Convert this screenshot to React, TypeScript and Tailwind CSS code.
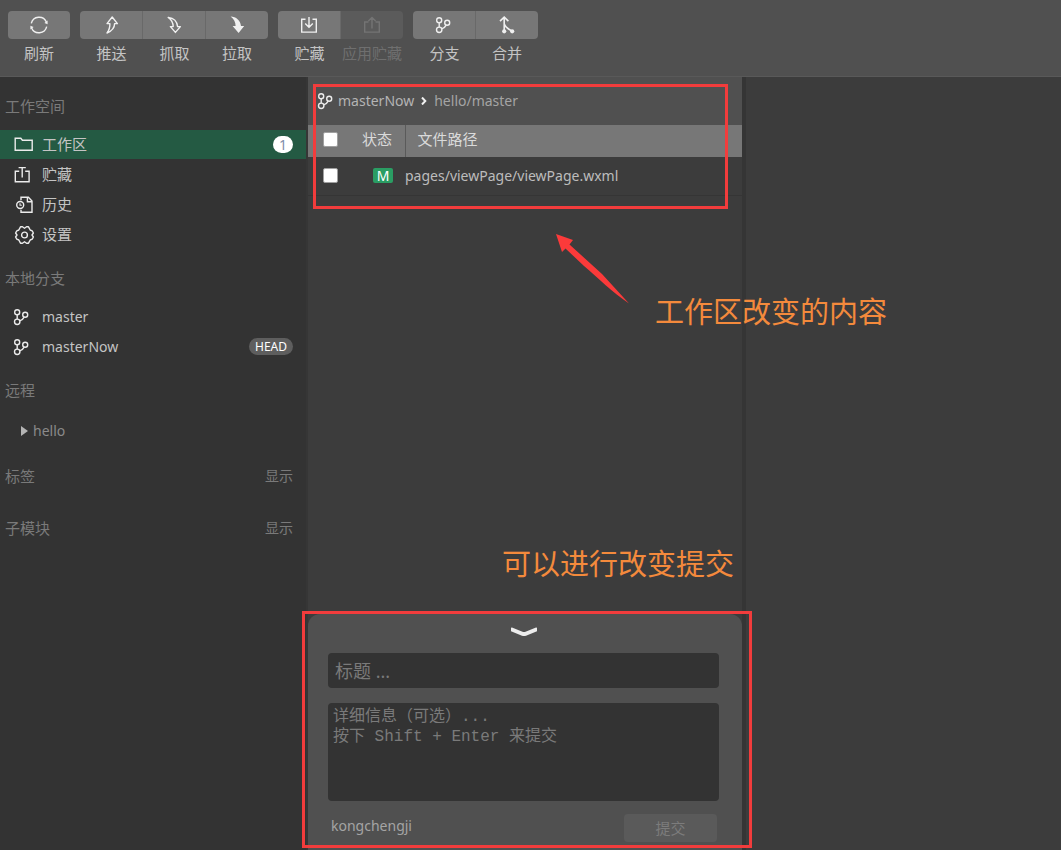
import type { ReactNode } from "react";

type IconProps = { className?: string };

function Svg({ className = "", children }: IconProps & { children: ReactNode }) {
  return (
    <svg
      viewBox="0 0 20 20"
      className={`size-5 shrink-0 ${className}`}
      fill="none"
      stroke="currentColor"
      strokeWidth="1.4"
      aria-hidden="true"
    >
      {children}
    </svg>
  );
}

const RefreshIcon = () => (
  <Svg>
    <path d="M2.3 8.3A8 8 0 0 1 17.4 7M17.7 11.7A8 8 0 0 1 2.6 13" />
    <path d="M18.6 5.6v3.6l-3.2-1.2zM1.4 14.4v-3.6l3.2 1.2z" fill="currentColor" stroke="none" />
  </Svg>
);

const PushIcon = () => (
  <Svg>
    <path
      d="M11.2 2L16.400 8.600h-2.800c0 4-2.400 7.400-7.600 9.400c2-2.400 3-5 2.900-9.400H6z"
      strokeLinejoin="round"
    />
  </Svg>
);

const FetchIcon = () => (
  <Svg>
    <path
      d="M4.200 2.400c5 .6 8.800 3.600 9.400 9.200h2.800l-5 5.800l-5-5.800h2.800c0-3.600-1.800-6.800-5-9.200z"
      strokeLinejoin="round"
    />
  </Svg>
);

const PullIcon = () => (
  <Svg>
    <path d="M3.6 1.6c5.6.4 9.6 3.600 10.400 9.400h3.200l-5.600 7l-6-7h3c0-3.600-1.600-6.800-5-9.400z" fill="currentColor" stroke="none" />
  </Svg>
);

const StashIcon = () => (
  <Svg>
    <path d="M6.500 4.300H2.700v12.800h14.600V4.300h-3.800M10 2v10M6.200 8.400l3.800 3.800l3.800-3.800" />
  </Svg>
);

const ApplyIcon = () => (
  <Svg>
    <path d="M6.500 7H2.700v10.100h14.600V7h-3.800M10 13.400V2.600M6.400 6L10 2.400L13.600 6" />
  </Svg>
);

const BranchIcon = ({ className = "" }: IconProps) => (
  <Svg className={className}>
    <circle cx="5.200" cy="5.200" r="2.500" />
    <circle cx="5.200" cy="14.800" r="2.700" />
    <circle cx="13.200" cy="7.800" r="2.500" />
    <path d="M5.200 7.800v4.200M12.200 10.100c-1 2-2.200 2.900-4.500 3.800" />
  </Svg>
);

const MergeIcon = () => (
  <Svg>
    <path d="M7.200 16V2.400M3 6.200l4.200-4l4.200 4M7.200 8.800c.8 3 3 4.600 7.200 7" strokeWidth="1.600" />
    <circle cx="7.200" cy="16.300" r="2.100" fill="currentColor" stroke="none" />
    <circle cx="15.200" cy="16.300" r="2.100" fill="currentColor" stroke="none" />
  </Svg>
);

const FolderIcon = () => (
  <Svg>
    <path d="M1.200 3.200h5.600l1.600 2h9.800v10H1.200z" />
  </Svg>
);

const ShelfIcon = () => (
  <Svg>
    <path d="M5.200 6.200H1.300v10.600h13.800V6.200h-3.900M8.200 12.400V2.600M4.600 2.600h7.200" />
  </Svg>
);

const HistoryIcon = () => (
  <Svg>
    <path d="M7 5.300V2.300h7.400l3.600 3.700v11.200H7v-2.400M13.400 2.500v4.300h4.400" />
    <circle cx="6.200" cy="10" r="3.500" />
    <path d="M6 8.200v2h1.800" strokeWidth="1.100" />
  </Svg>
);

const SettingsIcon = () => (
  <Svg className="translate-x-0">
    <path
      d="M6.500 1.800h2L10.500 3.200L12.500 1.800h2l1.700 3.200l2 .8l1.200 2.200l-1.400 2l1.400 2l-1.200 2.200l-2 .8l-1.700 3.200h-2L10.500 16.800L8.500 18.200h-2L4.800 15l-2-.8l-1.200-2.200l1.400-2l-1.400-2l1.200-2.200l2-.8z"
      strokeLinejoin="round"
    />
    <circle cx="10.500" cy="10" r="2.900" />
  </Svg>
);

type Tool = { label: string; icon: ReactNode; disabled?: boolean };

const toolGroups: Tool[][] = [
  [{ label: "刷新", icon: <RefreshIcon /> }],
  [
    { label: "推送", icon: <PushIcon /> },
    { label: "抓取", icon: <FetchIcon /> },
    { label: "拉取", icon: <PullIcon /> },
  ],
  [
    { label: "贮藏", icon: <StashIcon /> },
    { label: "应用贮藏", icon: <ApplyIcon />, disabled: true },
  ],
  [
    { label: "分支", icon: <BranchIcon /> },
    { label: "合并", icon: <MergeIcon /> },
  ],
];

const workspaceItems = [
  { label: "工作区", icon: <FolderIcon />, count: 1 },
  { label: "贮藏", icon: <ShelfIcon /> },
  { label: "历史", icon: <HistoryIcon /> },
  { label: "设置", icon: <SettingsIcon /> },
];

const branches = [{ name: "master" }, { name: "masterNow", head: true }];

function Toolbar() {
  return (
    <header className="flex h-[77px] gap-2.5 border-b border-[#595959] bg-[#505050] px-2 pt-[11px]">
      {toolGroups.map((group) => (
        <div key={group[0].label} className="flex">
          {group.map((tool) => (
            <button
              key={tool.label}
              type="button"
              disabled={tool.disabled}
              className="group flex w-[63px] flex-col items-center gap-1 whitespace-nowrap text-[#c4c4c4] last:w-[62px] disabled:text-[#6f6f6f]"
            >
              <span className="flex h-7 w-full items-center justify-center border-r border-[#696969] bg-[#777777] text-[#f0f0f0] group-first:rounded-l group-last:rounded-r group-last:border-r-0 group-disabled:bg-[#5b5b5b] group-disabled:text-[#747474]">
                {tool.icon}
              </span>
              <span className="leading-5">{tool.label}</span>
            </button>
          ))}
        </div>
      ))}
    </header>
  );
}

function Heading({ children }: { children: ReactNode }) {
  return <h2 className="px-[5px] leading-5 text-[#7a7a7a]">{children}</h2>;
}

function Sidebar() {
  return (
    <nav className="border-r-2 border-[#363636] bg-[#333333] pt-[19px]">
      <Heading>工作空间</Heading>
      <ul className="mt-3.5 flex flex-col gap-px">
        {workspaceItems.map((item) => (
          <li key={item.label}>
            <a
              href="#"
              className={`flex h-[29px] items-center gap-2 pr-[13px] pl-3.5 text-[#c4c4c4] ${item.count ? "bg-[#245a43]" : ""}`}
            >
              <span className="text-[#ececec]">{item.icon}</span>
              {item.label}
              {item.count && (
                <span className="ml-auto w-5 rounded-full bg-white text-center text-sm leading-[17px] text-[#7f8dab]">
                  {item.count}
                </span>
              )}
            </a>
          </li>
        ))}
      </ul>

      <div className="mt-[19px]">
        <Heading>本地分支</Heading>
      </div>
      <ul className="mt-3.5 flex flex-col gap-px">
        {branches.map((branch) => (
          <li key={branch.name}>
            <a href="#" className="flex h-[29px] items-center gap-2 pr-[13px] pl-3 text-sm text-[#c4c4c4]">
              <BranchIcon className="mr-0.5 text-[#ececec]" />
              {branch.name}
              {branch.head && (
                <span className="ml-auto rounded-full bg-[#5e5e5e] px-1.5 text-xs leading-[17px] text-white">
                  HEAD
                </span>
              )}
            </a>
          </li>
        ))}
      </ul>

      <div className="mt-[19px]">
        <Heading>远程</Heading>
      </div>
      <button
        type="button"
        className="mt-3.5 mb-[18px] flex h-[34px] items-center gap-[5px] pl-[21px] text-sm text-[#8a8a8a]"
      >
        <svg viewBox="0 0 7 10" className="h-2.5 w-[7px]" fill="#b4b4b4" aria-hidden="true">
          <path d="M0 0l7 5l-7 5z" />
        </svg>
        hello
      </button>

      {["标签", "子模块"].map((title) => (
        <div key={title} className="mb-8 flex items-center justify-between pr-[13px]">
          <Heading>{title}</Heading>
          <button type="button" aria-label={`显示${title}`} className="text-sm leading-5 text-[#7a7a7a]">
            显示
          </button>
        </div>
      ))}
    </nav>
  );
}

function Tick({ label }: { label: string }) {
  return (
    <input
      type="checkbox"
      aria-label={label}
      className="block size-[15px] appearance-none rounded-xs border border-[#a0a0a0] bg-white checked:bg-[#2aa568]"
    />
  );
}

function Changes() {
  return (
    <section className="relative">
      <div className="flex h-12 items-center bg-[#505050] pl-2 text-sm">
        <BranchIcon className="mr-0.5 text-[#ececec]" />
        <span className="text-[#b4b4b4]">masterNow</span>
        <svg viewBox="0 0 6 8" className="mx-[7px] h-2 w-1.5" fill="none" stroke="#f0f0f0" strokeWidth="2" aria-hidden="true">
          <path d="M1 0.500l3.300 3.500l-3.300 3.500" />
        </svg>
        <span className="text-[#a4a4a4]">hello/master</span>
      </div>
      <table className="w-full table-fixed border-collapse text-left">
        <thead>
          <tr className="h-8 bg-[#777777] text-[#dadada]">
            <th className="w-11 pb-1 pl-[15px] font-normal">
              <Tick label="全选" />
            </th>
            <th className="w-[53px] border-r border-[#5a5a5a] pb-1 pl-2.5 font-normal">状态</th>
            <th className="pb-1 pl-3 font-normal">文件路径</th>
          </tr>
        </thead>
        <tbody>
          <tr className="h-[38px] border-b border-[#353535] text-[#bcbcbc]">
            <td className="pl-[15px]">
              <Tick label="pages/viewPage/viewPage.wxml" />
            </td>
            <td className="pl-[21px]">
              <span className="block w-5 rounded-xs bg-[#2a9d63] text-center text-sm leading-[15px] text-white">M</span>
            </td>
            <td className="truncate text-sm">pages/viewPage/viewPage.wxml</td>
          </tr>
        </tbody>
      </table>
      <div className="pointer-events-none absolute top-[7px] right-3.5 left-[5px] h-[125px] border-3 border-[#f23c3c]" />
      <svg
        viewBox="0 0 74 70"
        className="pointer-events-none absolute top-[157px] left-[248px] h-[70px] w-[74px]"
        fill="#fb3a3a"
        aria-hidden="true"
      >
        <path d="M0 0l17 6l-3.500 4.500L46 40L73 69.500C56 58 42 44 28 32L9.500 14.500L6 18z" />
      </svg>
      <p className="pointer-events-none absolute top-[215px] left-[347px] text-[29px] leading-10 whitespace-nowrap text-[#f48a3c]">
        工作区改变的内容
      </p>
    </section>
  );
}

function CommitPanel() {
  return (
    <form
      className="relative mt-auto flex flex-col rounded-t-xl bg-[#505050] pt-[13px] pr-[23px] pb-2 pl-5"
      onSubmit={(event) => event.preventDefault()}
    >
      <p className="pointer-events-none absolute -top-[70px] right-2 text-[29px] leading-10 whitespace-nowrap text-[#f48a3c]">
        可以进行改变提交
      </p>
      <button type="button" aria-label="收起" className="mb-4 self-center">
        <svg viewBox="0 0 28 10" className="h-2.5 w-7" fill="#ececec" aria-hidden="true">
          <path d="M1 .8L2 .4L12.500 4.700q1.500.5 3 0L26 .4l1 .4v3.400L16 8.700q-2 .7-4 0L1 4.200z" />
        </svg>
      </button>
      <input
        type="text"
        aria-label="标题"
        placeholder="标题 ..."
        className="mb-[15px] h-[35px] rounded-sm bg-[#333333] px-[7px] text-lg text-[#c8c8c8] placeholder:text-[#7a7a7a]"
      />
      <textarea
        aria-label="详细信息"
        placeholder={"详细信息（可选）...\n按下 Shift + Enter 来提交"}
        className="mb-[13px] h-[98px] resize-none rounded-sm bg-[#333333] px-[5px] py-1 font-['Liberation_Mono','Noto_Sans_CJK_SC',monospace] text-base leading-5 text-[#c8c8c8] placeholder:text-[#7a7a7a]"
      />
      <div className="flex h-7 items-center justify-between pr-0.5 pl-[3px]">
        <span className="pb-1 text-sm text-[#a4a4a4]">kongchengji</span>
        <button type="submit" disabled className="h-7 w-[93px] rounded-sm bg-[#5a5a5a] text-[#7c7c7c]">
          提交
        </button>
      </div>
      <div className="pointer-events-none absolute -top-[3px] -right-2.5 bottom-0.5 -left-1.5 border-3 border-[#f23c3c]" />
    </form>
  );
}

export default function App() {
  return (
    <div className="flex min-h-screen flex-col bg-[#3c3c3c] font-['Noto_Sans','Noto_Sans_CJK_SC',sans-serif] text-[15px]">
      <Toolbar />
      <div className="grid flex-1 grid-cols-[308px_438fr_315fr]">
        <Sidebar />
        <main className="relative z-10 flex flex-col border-r-4 border-[#353535]">
          <Changes />
          <CommitPanel />
        </main>
        <aside />
      </div>
    </div>
  );
}
